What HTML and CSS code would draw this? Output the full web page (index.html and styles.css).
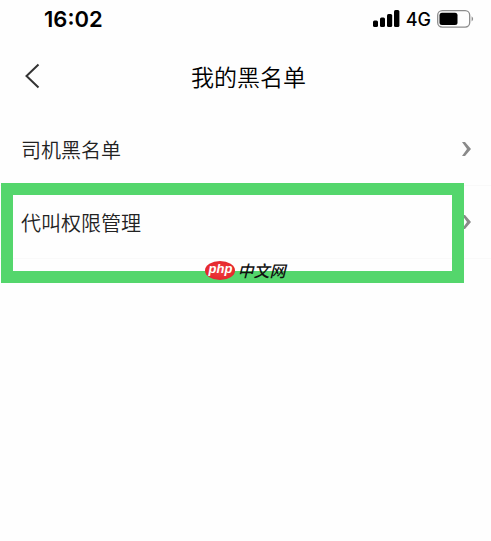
FILE: index.html
```
<!DOCTYPE html>
<html lang="zh-CN">
<head>
    <meta charset="UTF-8">
    <meta name="viewport" content="width=device-width, initial-scale=1.0">
    <title>我的黑名单</title>
    <link rel="stylesheet" href="styles.css">
</head>
<body>
    <div class="status">
        <span class="time">16:02</span>
        <div class="signal">
            <svg width="27" height="18" viewBox="0 0 27 18" aria-hidden="true">
                <rect x="0" y="10.5" width="5" height="6.5" rx="1.5"/>
                <rect x="7" y="7.5" width="5" height="9.5" rx="1.5"/>
                <rect x="14" y="4" width="5.2" height="13" rx="1.5"/>
                <rect x="21" y="0" width="5.4" height="17" rx="1.5"/>
            </svg>
            <span class="network">4G</span>
            <svg width="37" height="18" viewBox="0 0 37 18" aria-hidden="true">
                <rect x="0.7" y="0.7" width="32" height="16.4" rx="4.5" fill="none" stroke="#8c8c8c" stroke-width="1.3"/>
                <rect x="2.5" y="2.8" width="18" height="12.2" rx="2.5"/>
                <path d="M34.6 6.3q3 2.6 0 5.2z" fill="#8c8c8c"/>
            </svg>
        </div>
    </div>

    <header class="navbar">
        <button class="back" type="button" aria-label="返回">
            <svg width="15" height="26" viewBox="0 0 15 26">
                <path d="M13.5 1.5L1.5 13l12 11.5" fill="none" stroke="#333" stroke-width="2"/>
            </svg>
        </button>
        <h1>我的黑名单</h1>
    </header>

    <main class="list">
        <a class="row" href="#driver">
            <span>司机黑名单</span>
            <svg width="9" height="14" viewBox="0 0 9 14" aria-hidden="true">
                <path d="M0 0h3l6 7-6 7H0l5-7z" fill="#8a8a8a"/>
            </svg>
        </a>
        <a class="row" href="#proxy">
            <span>代叫权限管理</span>
            <svg width="9" height="14" viewBox="0 0 9 14" aria-hidden="true">
                <path d="M0 0h3l6 7-6 7H0l5-7z" fill="#8a8a8a"/>
            </svg>
        </a>
        <!-- green frame around the second row -->
        <div class="highlight"></div>
        <div class="watermark">
            <span class="php">php</span>
            <span class="site">中文网</span>
        </div>
    </main>
</body>
</html>
```
FILE: styles.css
```
* {
    box-sizing: border-box;
}

body {
    margin: 0;
    min-height: 100vh;
    background-color: #fefefe;
    color: #333;
    font-family: "Noto Sans CJK SC", sans-serif;
}

.status {
    display: flex;
    justify-content: space-between;
    align-items: center;
    height: 38px;
    padding: 0 17px 0 44px;
    color: #000;
    font-family: Inter, sans-serif;
}

.time {
    font-size: 22px;
    font-weight: 600;
}

.signal {
    display: flex;
    align-items: center;
    gap: 6px;
}

.network {
    font-size: 18px;
    font-weight: 500;
}

.navbar {
    display: grid;
    grid-template-columns: 64px 1fr 64px;
    align-items: center;
    height: 75px;
    padding-left: 6px;
}

.back {
    display: flex;
    justify-content: flex-start;
    padding: 10px 19px;
    border: 0;
    background: none;
    cursor: pointer;
}

.navbar h1 {
    margin: 0;
    color: #000;
    font-size: 23px;
    font-weight: 350;
    text-align: center;
}

.list {
    position: relative;
    padding-bottom: 40px;
}

.row {
    display: flex;
    justify-content: space-between;
    align-items: center;
    height: 73px;
    padding: 0 20px 0 21px;
    border-bottom: 1px solid #f9f9f9;
    color: #222;
    font-size: 20px;
    font-weight: 350;
    text-decoration: none;
}

.highlight {
    position: absolute;
    top: 70px;
    left: 1px;
    right: 27px;
    height: 100px;
    border: 12px solid #54d66c;
}

.watermark {
    position: absolute;
    top: 147px;
    left: 0;
    right: 0;
    display: flex;
    justify-content: center;
    align-items: center;
    gap: 2px;
    height: 20px;
    font-style: italic;
}

.php {
    width: 30px;
    height: 19px;
    border-radius: 50%;
    background: radial-gradient(#f04040, #e01c24);
    color: #fff;
    font-family: "Liberation Sans", sans-serif;
    font-size: 13px;
    font-weight: bold;
    line-height: 16px;
    text-align: center;
}

.site {
    color: #111;
    font-size: 16px;
    font-weight: 500;
    line-height: 20px;
}
```
